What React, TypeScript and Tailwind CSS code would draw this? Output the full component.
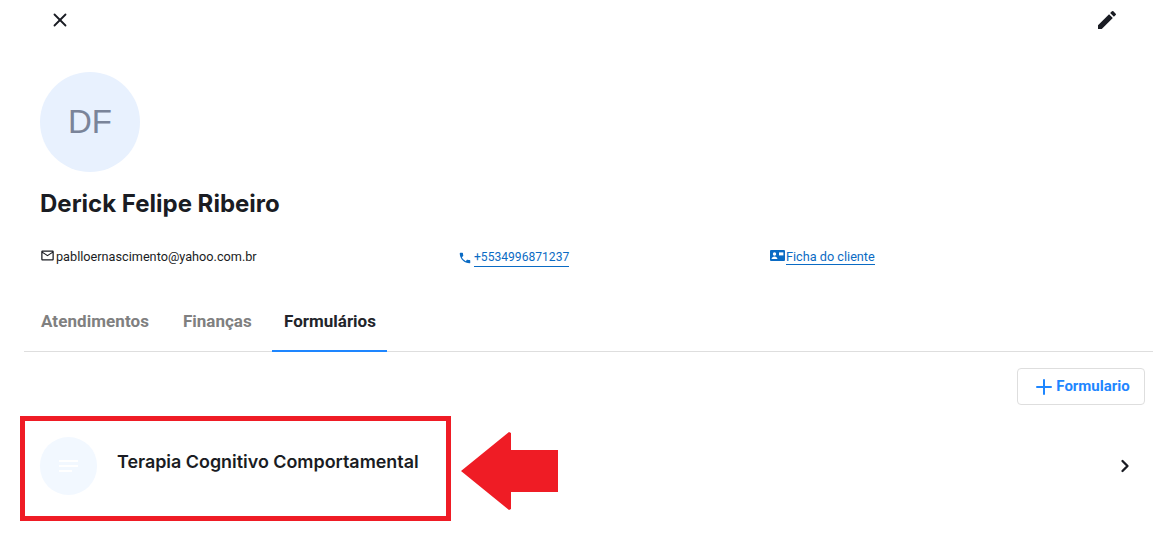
import { Plus, ChevronRight, X } from "lucide-react"

function Pencil() {
  return (
    <svg width="24" height="24" viewBox="0 0 24 24" fill="#1a1c23">
      <path d="M3 17.25V21h3.75L17.81 9.94l-3.75-3.75L3 17.25zM20.71 7.04a1 1 0 0 0 0-1.41l-2.34-2.34a1 1 0 0 0-1.41 0l-1.83 1.83 3.75 3.75 1.83-1.83z" />
    </svg>
  )
}

function MailIcon() {
  return (
    <svg width="15" height="15" viewBox="0 0 24 24" fill="#1a1c23" className="-mt-[3px]">
      <path d="M20 4H4c-1.1 0-1.99.9-1.99 2L2 18c0 1.1.9 2 2 2h16c1.1 0 2-.9 2-2V6c0-1.1-.9-2-2-2zm0 14H4V8l8 5 8-5v10zm-8-7L4 6h16l-8 5z" />
    </svg>
  )
}

function PhoneIcon() {
  return (
    <svg width="14" height="14" viewBox="0 0 24 24" fill="#0b6bc4" className="mt-[2px]">
      <path d="M6.62 10.79c1.44 2.83 3.76 5.14 6.59 6.59l2.2-2.2c.27-.27.67-.36 1.02-.24 1.12.37 2.33.57 3.57.57.55 0 1 .45 1 1V20c0 .55-.45 1-1 1-9.39 0-17-7.61-17-17 0-.55.45-1 1-1h3.5c.55 0 1 .45 1 1 0 1.25.2 2.45.57 3.57.11.35.03.74-.25 1.02l-2.2 2.2z" />
    </svg>
  )
}

function ContactCard() {
  return (
    <svg width="15" height="12" viewBox="0 0 15 12" fill="#0b6bc4" className="-mt-[2px]">
      <path d="M1 0h13a1 1 0 0 1 1 1v9a1 1 0 0 1-1 1H1a1 1 0 0 1-1-1V1a1 1 0 0 1 1-1z" />
      <circle cx="4.5" cy="4" r="1.7" fill="#fff" />
      <path d="M1.6 9c0-1.7 1.4-2.6 2.9-2.6S7.4 7.3 7.4 9z" fill="#fff" />
      <rect x="9" y="2.4" width="4.4" height="3" fill="#fff" />
    </svg>
  )
}

export default function App() {
  return (
    <div className="relative h-[538px] w-full overflow-hidden bg-white font-['Inter',sans-serif] text-[#1a1c23]">
      <div className="flex h-[40px] items-center justify-between pl-[49px] pr-[46px]">
        <X size={22} strokeWidth={2} />
        <Pencil />
      </div>

      <div className="mt-[32px] pl-[40px]">
        <div className="flex h-[100px] w-[100px] items-center justify-center rounded-full bg-[#e8f1fe] font-['Liberation_Sans',sans-serif] text-[33px] text-[#7a8499]">
          DF
        </div>
        <h1 className="mt-[17px] text-[24px] leading-[30px] font-bold">Derick Felipe Ribeiro</h1>
      </div>

      <div className="mt-[26px] flex h-[24px] items-center pl-[40px] font-['Roboto',sans-serif] text-[12.7px]">
        <div className="flex w-[418px] items-center gap-[1px]">
          <MailIcon />
          <span>pablloernascimento@yahoo.com.br</span>
        </div>
        <div className="flex w-[312px] items-center gap-[2px] text-[#0b6bc4]">
          <PhoneIcon />
          <span className="border-b border-[#0b6bc4] text-[12.1px] leading-[18px]">+5534996871237</span>
        </div>
        <div className="flex items-center gap-[1px] text-[#0b6bc4]">
          <ContactCard />
          <span className="border-b border-[#0b6bc4] leading-[15px]">Ficha do cliente</span>
        </div>
      </div>

      <div className="mx-[24px] mt-[25px] flex h-[58px] w-[1129px] border-b border-[#dedede] font-['Roboto',sans-serif] text-[17px] font-bold">
        <button className="w-[142px] pb-[1px] pl-[17px] text-left text-[#808080] tracking-[0.08px]">Atendimentos</button>
        <button className="w-[106px] pb-[1px] pl-[17px] text-left text-[#808080]">Finanças</button>
        <button className="-mb-px w-[115px] border-b-2 border-[#1e86ff] pl-[1px] text-[#22242a]">Formulários</button>
      </div>

      <div className="mt-[16px] flex justify-end pr-[20px]">
        <button className="flex h-[37px] w-[128px] items-center justify-center rounded-[4px] border border-[#dedede] font-['Roboto',sans-serif] text-[15px] font-bold text-[#1e86ff]">
          <Plus size={24} strokeWidth={2} />
          Formulario
        </button>
      </div>

      <div className="mt-[32px] flex items-center justify-between pl-[40px] pr-[30px]">
        <div className="flex items-center gap-[20px]">
          <div className="flex h-[58px] w-[57px] items-center justify-center rounded-full bg-[#f2f8ff]">
            <svg width="20" height="13" viewBox="0 0 20 13" fill="#fff">
              <rect width="19" height="2" />
              <rect y="5" width="19" height="2" />
              <rect y="10" width="13" height="2" />
            </svg>
          </div>
          <span className="-mt-[7px] text-[17.9px] font-semibold">Terapia Cognitivo Comportamental</span>
        </div>
        <ChevronRight size={20} strokeWidth={2.8} />
      </div>

      {/* marcacao por cima do print */}
      <div className="absolute top-[416px] left-[20px] h-[105px] w-[431px] border-[5px] border-[#ef1c25]" />
      <svg className="absolute top-[431px] left-[460px]" width="99" height="80" viewBox="0 0 99 80" fill="#ef1c25">
        <path d="M1 40 L49 1 L51 2 V19 H98 V61 H51 V78 L49 79 Z" />
      </svg>
    </div>
  )
}
